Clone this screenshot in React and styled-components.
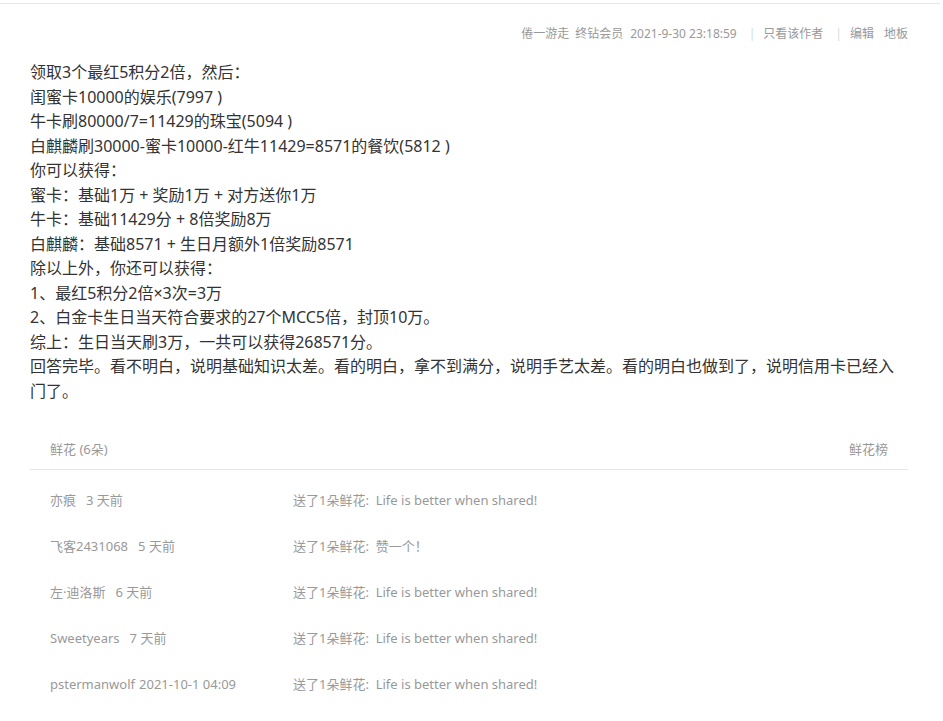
import React from "react";
import styled, { createGlobalStyle } from "styled-components";

const Global = createGlobalStyle`
  html, body { margin: 0; padding: 0; background: #fff; }
  body { font-family: "Noto Sans", "Noto Sans CJK SC", sans-serif; }
`;

const Page = styled.div`
  width: 943px;
  padding-top: 3px;
`;

const Post = styled.div`
  border-top: 1px solid #e6e6e6;
  margin-right: 3px;
  padding: 0 32px 0 30px;
`;

const Meta = styled.div`
  display: flex;
  justify-content: flex-end;
  align-items: baseline;
  height: 26px;
  line-height: 26px;
  margin-top: 17px;
  font-size: 12px;
  color: #999;
  white-space: pre;
`;

const MetaItem = styled.span`
  margin-left: ${(p) => p.$gap || 0}px;
`;

const Sep = styled.span`
  color: #cfe0d6;
  margin: 0 8px 0 12px;
`;

const Body = styled.div`
  margin-top: 13px;
  font-size: 16px;
  line-height: 24.5px;
  color: #333;
`;

const Line = styled.div``;

const Flowers = styled.div`
  margin-top: 25px;
`;

const FlowerHead = styled.div`
  display: flex;
  justify-content: space-between;
  align-items: center;
  height: 41px;
  padding: 0 20px;
  border-bottom: 1px solid #e5e5e5;
  font-size: 13px;
  color: #999;
`;

const FlowerRow = styled.div`
  display: flex;
  align-items: baseline;
  height: 46px;
  line-height: 46px;
  padding-left: 20px;
  font-size: 13px;
  color: #999;
  white-space: pre;
`;

const FlowerList = styled.div`
  padding-top: 7px;
`;

const Who = styled.div`
  width: 243px;
`;

const When = styled.span`
  margin-left: ${(p) => p.$gap}px;
`;

const Msg = styled.div``;

const lines = [
  "领取3个最红5积分2倍，然后：",
  "闺蜜卡10000的娱乐(7997 )",
  "牛卡刷80000/7=11429的珠宝(5094 )",
  "白麒麟刷30000-蜜卡10000-红牛11429=8571的餐饮(5812 )",
  "你可以获得：",
  "蜜卡：基础1万 + 奖励1万 + 对方送你1万",
  "牛卡：基础11429分 + 8倍奖励8万",
  "白麒麟：基础8571 + 生日月额外1倍奖励8571",
  "除以上外，你还可以获得：",
  "1、最红5积分2倍×3次=3万",
  "2、白金卡生日当天符合要求的27个MCC5倍，封顶10万。",
  "综上：生日当天刷3万，一共可以获得268571分。",
  "回答完毕。看不明白，说明基础知识太差。看的明白，拿不到满分，说明手艺太差。看的明白也做到了，说明信用卡已经入门了。",
];

const flowers = [
  ["亦痕", "3 天前", 10, "Life is better when shared!"],
  ["飞客2431068", "5 天前", 10, "赞一个！"],
  ["左·迪洛斯", "6 天前", 10, "Life is better when shared!"],
  ["Sweetyears", "7 天前", 10, "Life is better when shared!"],
  ["pstermanwolf", "2021-10-1 04:09", 4, "Life is better when shared!"],
];

export default function App() {
  return (
    <Page>
      <Global />
      <Post>
        <Meta>
          <MetaItem>倦一游走</MetaItem>
          <MetaItem $gap={6}>终钻会员</MetaItem>
          <MetaItem $gap={7}>2021-9-30 23:18:59</MetaItem>
          <Sep>|</Sep>
          <MetaItem>只看该作者</MetaItem>
          <Sep>|</Sep>
          <MetaItem>编辑</MetaItem>
          <MetaItem $gap={10}>地板</MetaItem>
        </Meta>
        <Body>
          {lines.map((l, i) => (
            <Line key={i}>{l}</Line>
          ))}
        </Body>
        <Flowers>
          <FlowerHead>
            <span>鲜花 (6朵)</span>
            <span>鲜花榜</span>
          </FlowerHead>
          <FlowerList>
            {flowers.map(([name, time, gap, m], i) => (
              <FlowerRow key={i}>
                <Who>
                  <span>{name}</span>
                  <When $gap={gap}>{time}</When>
                </Who>
                <Msg>送了1朵鲜花:  {m}</Msg>
              </FlowerRow>
            ))}
          </FlowerList>
        </Flowers>
      </Post>
    </Page>
  );
}
